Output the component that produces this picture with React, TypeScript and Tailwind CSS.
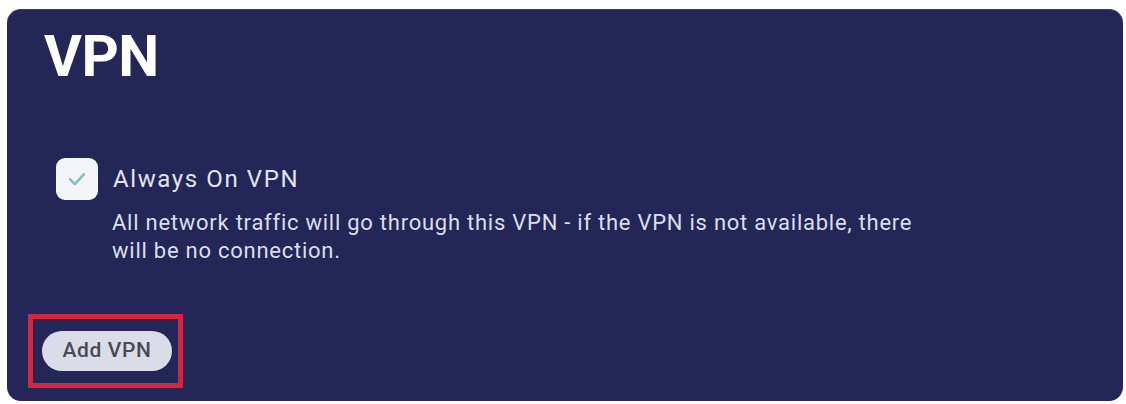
import React from "react";

export default function App() {
  return (
    <div
      className="w-[1126px] h-[404px] bg-white pt-[9px] pl-[7px] pr-[3px]"
      style={{ fontFamily: "Roboto, 'Noto Sans', sans-serif" }}
    >
      <div className="h-[392px] rounded-[14px] bg-[#232656] border-t border-[#3a3d66] flex flex-col">
        <h1 className="pl-[37px] pt-[17px] text-[58px] leading-none font-bold text-white tracking-[-0.5px]">
          VPN
        </h1>
        <div className="flex items-center mt-[73px] pl-[49px]">
          <div className="w-[42px] h-[42px] rounded-[9px] bg-[#f3f5f9] flex items-center justify-center shrink-0">
            <svg width="22" height="22" viewBox="0 0 24 24" fill="none">
              <path
                d="M4.5 12.5l5 5L19.5 7"
                stroke="#86bcc4"
                strokeWidth="2.8"
                strokeLinecap="round"
                strokeLinejoin="round"
              />
            </svg>
          </div>
          <div className="ml-[15px] text-[24px] leading-[30px] text-[#e2e3f2] tracking-[1.6px]">
            Always On VPN
          </div>
        </div>
        <div className="pl-[105px] mt-[9px] text-[22px] leading-[28px] text-[#dcdeee] tracking-[0.75px] w-[930px]">
          All network traffic will go through this VPN - if the VPN is not available, there will be no connection.
        </div>
        <div className="mt-[49px] ml-[21px] w-[155px] h-[74px] border-[5px] border-[#d8243a] flex items-center pl-[9px]">
          <button className="w-[130px] h-[40px] rounded-full bg-[#dadce7] text-[21px] font-medium text-[#4a4a52] tracking-[0.6px]">
            Add VPN
          </button>
        </div>
      </div>
    </div>
  );
}
